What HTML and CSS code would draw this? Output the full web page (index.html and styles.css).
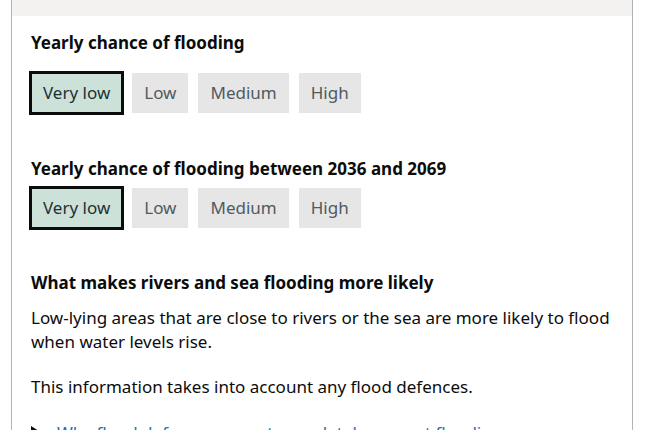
FILE: index.html
```html
<!DOCTYPE html>
<html lang="en">
<head>
    <meta charset="UTF-8">
    <meta name="viewport" content="width=device-width, initial-scale=1.0">
    <title>Flood risk</title>
    <link rel="stylesheet" href="styles.css">
</head>
<body>
    <div class="card">
        <div class="card-top"></div>
        <div class="card-body">
            <h3>Yearly chance of flooding</h3>
            <div class="scale">
                <span class="tag selected">Very low</span>
                <span class="tag">Low</span>
                <span class="tag">Medium</span>
                <span class="tag">High</span>
            </div>

            <h3 class="close">Yearly chance of flooding between 2036 and 2069</h3>
            <div class="scale last">
                <span class="tag selected">Very low</span>
                <span class="tag">Low</span>
                <span class="tag">Medium</span>
                <span class="tag">High</span>
            </div>

            <h3>What makes rivers and sea flooding more likely</h3>
            <p>Low-lying areas that are close to rivers or the sea are more likely to flood when water levels rise.</p>
            <p>This information takes into account any flood defences.</p>

            <details>
                <summary><span class="summary-text">Why flood defences cannot completely prevent flooding</span></summary>
                <p>Flood defences reduce the chance of flooding but they can be overtopped or fail.</p>
            </details>
        </div>
    </div>
</body>
</html>
```

FILE: styles.css
```css
body {
    margin: 0;
    font-family: "Noto Sans", "Liberation Sans", sans-serif;
    color: #0b0c0c;
    background: #fff;
}
.card {
    margin-left: 11px;
    width: 620px;
    border-left: 1px solid #b1b4b6;
    border-right: 1px solid #b1b4b6;
}
.card-top {
    height: 16px;
    background: #f3f2f1;
}
.card-body {
    padding: 14px 20px 20px 19px;
}
h3 {
    font-size: 17px;
    line-height: 25px;
    font-weight: 700;
    margin: 0 0 18px 0;
}
h3.close {
    margin-bottom: 7px;
}
.scale {
    display: flex;
    gap: 10px;
    margin-bottom: 43px;
}
.scale.last {
    margin-bottom: 42px;
}
.tag {
    height: 40px;
    line-height: 40px;
    padding: 0 12px;
    font-size: 17px;
    color: #505a5f;
    background: #e6e6e6;
}
.tag.selected {
    background: #cce2d8;
    color: #1f3038;
    outline: 3px solid #0b0c0c;
    outline-offset: -1px;
}
p {
    font-size: 17px;
    line-height: 24px;
    margin: 0 0 21px 0;
}
h3 + p {
    margin-top: -7px;
}
summary {
    list-style: none;
    color: #1d70b8;
    font-size: 17px;
    line-height: 25px;
    cursor: pointer;
    margin-top: 5px;
}
summary::-webkit-details-marker {
    display: none;
}
summary::before {
    content: "";
    display: inline-block;
    width: 0;
    height: 0;
    border-left: 11px solid #0b0c0c;
    border-top: 7px solid transparent;
    border-bottom: 7px solid transparent;
    margin-right: 15px;
    vertical-align: -1px;
}
.summary-text {
    text-decoration: underline;
}
```
